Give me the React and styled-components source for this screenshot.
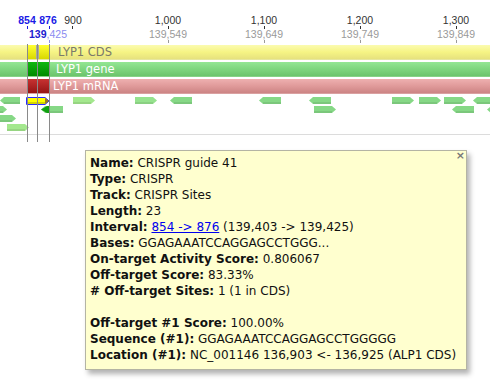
import React from "react";
import styled, { createGlobalStyle } from "styled-components";

const GlobalStyle = createGlobalStyle`
  html, body {
    margin: 0;
    padding: 0;
    background: #ffffff;
  }
  body {
    font-family: "DejaVu Sans", "Liberation Sans", sans-serif;
  }
`;

// 0.96 px per base, base 900 sits at x=72
const baseToX = (b) => 72 + (b - 900) * 0.96;

const Viewer = styled.div`
  position: relative;
  width: 490px;
  height: 392px;
  overflow: hidden;
  background: #fff;
  display: flex;
  flex-direction: column;
`;

const Ruler = styled.div`
  position: relative;
  height: 44px;
  flex: none;
  font-family: "Liberation Sans", Arial, sans-serif;
  font-size: 10.5px;
`;

const RulerLabel = styled.span`
  position: absolute;
  transform: translateX(-50%);
  top: ${(p) => (p.$row === 0 ? 14 : 28)}px;
  line-height: 12px;
  white-space: nowrap;
  color: ${(p) => p.$color || "#333"};
  font-weight: ${(p) => (p.$bold ? 700 : 400)};
`;

const Tick = styled.span`
  position: absolute;
  width: 1px;
  height: 3px;
  top: ${(p) => (p.$row === 0 ? 26 : 40)}px;
  background: ${(p) => p.$color || "#333"};
`;

const TrackStack = styled.div`
  display: flex;
  flex-direction: column;
  gap: 2px;
  padding-top: 1px;
  flex: none;
`;

const trackColors = {
  yellow: ["#fbfbb0", "#f6f484", "#e6e27e", "#ffff33", "#d8d800"],
  green: ["#94e694", "#7ed67e", "#6cc46c", "#10b810", "#008a00"],
  red: ["#eeb0b0", "#e09a9a", "#cc8484", "#c83232", "#941414"],
};

const Track = styled.div`
  position: relative;
  height: 15px;
  background: linear-gradient(
    to bottom,
    ${(p) => trackColors[p.$tone][0]} 0%,
    ${(p) => trackColors[p.$tone][1]} 50%,
    ${(p) => trackColors[p.$tone][2]} 100%
  );
  border-bottom: 1px solid rgba(0, 0, 0, 0.08);
  box-sizing: border-box;
  display: flex;
  align-items: center;
  padding-left: ${(p) => p.$labelX}px;
`;

const TrackLabel = styled.span`
  font-family: "DejaVu Sans", sans-serif;
  font-size: 11.5px;
  line-height: 15px;
  color: ${(p) => (p.$dark ? "#7a7a6a" : "#ffffff")};
  position: relative;
  z-index: 1;
`;

const Selected = styled.span`
  position: absolute;
  left: 27px;
  width: 22px;
  top: 0;
  bottom: 0;
  background: linear-gradient(
    to bottom,
    ${(p) => trackColors[p.$tone][3]},
    ${(p) => trackColors[p.$tone][4]}
  );
`;

const CursorBar = styled.span`
  position: absolute;
  left: 36px;
  width: 3px;
  top: 0;
  bottom: 0;
  background: #a8a8a0;
`;

const FeatureLane = styled.div`
  position: relative;
  height: 40px;
  flex: none;
  border-bottom: 1px solid #dcdcdc;
`;

const ArrowBox = styled.svg`
  position: absolute;
  overflow: visible;
`;

const SelLine = styled.span`
  position: absolute;
  top: 44px;
  height: 98px;
  width: 1px;
  background: #8a8a8a;
  z-index: 2;
`;

const Tooltip = styled.div`
  position: absolute;
  left: 85px;
  top: 150px;
  width: 382px;
  box-sizing: border-box;
  padding: 4px 4px 6px 4px;
  background: #ffffcf;
  border: 1px solid #b4b4a4;
  box-shadow: 3px 4px 5px rgba(0, 0, 0, 0.3);
  font-family: "DejaVu Sans", sans-serif;
  font-size: 12px;
  line-height: 16px;
  color: #111;
  z-index: 3;
  display: flex;
  flex-direction: column;
`;

const CloseX = styled.span`
  position: absolute;
  right: 1px;
  top: -3px;
  font-size: 11px;
  font-weight: 700;
  color: #777;
  font-family: "DejaVu Sans", sans-serif;
`;

const Line = styled.div`
  white-space: nowrap;
  min-height: 16px;
`;

const Key = styled.b`
  font-weight: 700;
`;

const Link = styled.a`
  color: #0000ee;
  text-decoration: underline;
`;

const rulerTop = [1000, 1100, 1200, 1300];

const features = [
  // row 0
  { x: 0, y: 99, w: 20, dir: "l", c: "#86d886" },
  { x: 73, y: 99, w: 22, dir: "r", c: "#a4e88e" },
  { x: 135, y: 99, w: 22, dir: "r", c: "#96e28e" },
  { x: 170, y: 99, w: 22, dir: "l", c: "#86d886" },
  { x: 259, y: 99, w: 22, dir: "l", c: "#86d886" },
  { x: 309, y: 99, w: 22, dir: "l", c: "#86d886" },
  { x: 392, y: 99, w: 22, dir: "r", c: "#86d886" },
  { x: 419, y: 99, w: 22, dir: "r", c: "#86d886" },
  { x: 444, y: 99, w: 22, dir: "r", c: "#86d886" },
  { x: 473, y: 99, w: 22, dir: "l", c: "#86d886" },
  // row 1
  { x: -15, y: 108, w: 22, dir: "r", c: "#86d886" },
  { x: 41, y: 108, w: 22, dir: "l", c: "#86d886", head: "#10a010" },
  { x: 314, y: 108, w: 22, dir: "r", c: "#86d886" },
  { x: 452, y: 108, w: 22, dir: "l", c: "#86d886" },
  { x: 487, y: 108, w: 22, dir: "l", c: "#86d886" },
  // row 2
  { x: -6, y: 117, w: 22, dir: "r", c: "#86d886" },
  // row 3
  { x: 7, y: 126, w: 22, dir: "r", c: "#a4e88e" },
];

const Arrow = ({ f, top }) => {
  const h = 7;
  const pts =
    f.dir === "r"
      ? `0,0 ${f.w - 4},0 ${f.w},${h / 2} ${f.w - 4},${h} 0,${h}`
      : `4,0 ${f.w},0 ${f.w},${h} 4,${h} 0,${h / 2}`;
  return (
    <ArrowBox width={f.w} height={h} style={{ left: f.x, top: f.y - top }}>
      <polygon points={pts} fill={f.c} />
      <rect x={f.dir === "r" ? 0 : 4} y={h - 2} width={f.w - 4} height={2} fill="rgba(0,0,0,0.08)" />
      {f.head && <polygon points={`0,${h / 2} 6,0 8,0 8,${h} 6,${h}`} fill={f.head} />}
    </ArrowBox>
  );
};

const SelectedArrow = ({ top }) => (
  <ArrowBox width={24} height={8} style={{ left: 26, top: 99 - top }}>
    <polygon points="0.5,0.5 19,0.5 23,4 19,7.5 0.5,7.5" fill="#ffff00" stroke="#2a2aff" strokeWidth="1" />
    <rect x="1" y="5" width="18" height="2" fill="#d4d400" />
    <polygon points="19,1 23,4 19,7" fill="#9a7a20" />
  </ArrowBox>
);

export default function App() {
  const laneTop = 96;
  return (
    <>
      <GlobalStyle />
      <Viewer>
        <Ruler>
          <RulerLabel $row={0} $bold $color="#1a1ae6" style={{ left: 27 }}>
            854
          </RulerLabel>
          <RulerLabel $row={0} $bold $color="#1a1ae6" style={{ left: 48 }}>
            876
          </RulerLabel>
          <RulerLabel $row={0} style={{ left: 73 }}>
            900
          </RulerLabel>
          <Tick $row={0} $color="#1a1ae6" style={{ left: 27 }} />
          <Tick $row={0} $color="#1a1ae6" style={{ left: 49 }} />
          <Tick $row={0} style={{ left: 72 }} />
          {rulerTop.map((b) => (
            <React.Fragment key={b}>
              <RulerLabel $row={0} style={{ left: baseToX(b) }}>
                {b.toLocaleString("en-US")}
              </RulerLabel>
              <Tick $row={0} style={{ left: Math.round(baseToX(b)) }} />
              <RulerLabel $row={1} $color="#9a9a9a" style={{ left: baseToX(b) }}>
                {(138549 + b).toLocaleString("en-US")}
              </RulerLabel>
              <Tick $row={1} $color="#9a9a9a" style={{ left: Math.round(baseToX(b)) }} />
            </React.Fragment>
          ))}
          <RulerLabel $row={1} $color="#8a8af0" style={{ left: 48 }}>
            <b style={{ color: "#2020d0" }}>139</b>,425
          </RulerLabel>
          <Tick $row={1} $color="#8a8af0" style={{ left: 49 }} />
        </Ruler>

        <TrackStack>
          <Track $tone="yellow" $labelX={58}>
            <Selected $tone="yellow" />
            <CursorBar />
            <TrackLabel $dark>LYP1 CDS</TrackLabel>
          </Track>
          <Track $tone="green" $labelX={56}>
            <Selected $tone="green" />
            <TrackLabel>LYP1 gene</TrackLabel>
          </Track>
          <Track $tone="red" $labelX={53}>
            <Selected $tone="red" />
            <TrackLabel>LYP1 mRNA</TrackLabel>
          </Track>
        </TrackStack>

        <FeatureLane>
          {features.map((f, i) => (
            <Arrow key={i} f={f} top={laneTop} />
          ))}
          <SelectedArrow top={laneTop} />
        </FeatureLane>

        <SelLine style={{ left: 27 }} />
        <SelLine style={{ left: 37 }} />
        <SelLine style={{ left: 49 }} />

        <Tooltip>
          <CloseX>×</CloseX>
          <Line>
            <Key>Name:</Key> CRISPR guide 41
          </Line>
          <Line>
            <Key>Type:</Key> CRISPR
          </Line>
          <Line>
            <Key>Track:</Key> CRISPR Sites
          </Line>
          <Line>
            <Key>Length:</Key> 23
          </Line>
          <Line>
            <Key>Interval:</Key> <Link href="#">854 -&gt; 876</Link> (139,403 -&gt; 139,425)
          </Line>
          <Line>
            <Key>Bases:</Key> GGAGAAATCCAGGAGCCTGGG...
          </Line>
          <Line>
            <Key>On-target Activity Score:</Key> 0.806067
          </Line>
          <Line>
            <Key>Off-target Score:</Key> 83.33%
          </Line>
          <Line>
            <Key># Off-target Sites:</Key> 1 (1 in CDS)
          </Line>
          <Line />
          <Line>
            <Key>Off-target #1 Score:</Key> 100.00%
          </Line>
          <Line>
            <Key>Sequence (#1):</Key> GGAGAAATCCAGGAGCCTGGGGG
          </Line>
          <Line>
            <Key>Location (#1):</Key> NC_001146 136,903 &lt;- 136,925 (ALP1 CDS)
          </Line>
        </Tooltip>
      </Viewer>
    </>
  );
}
